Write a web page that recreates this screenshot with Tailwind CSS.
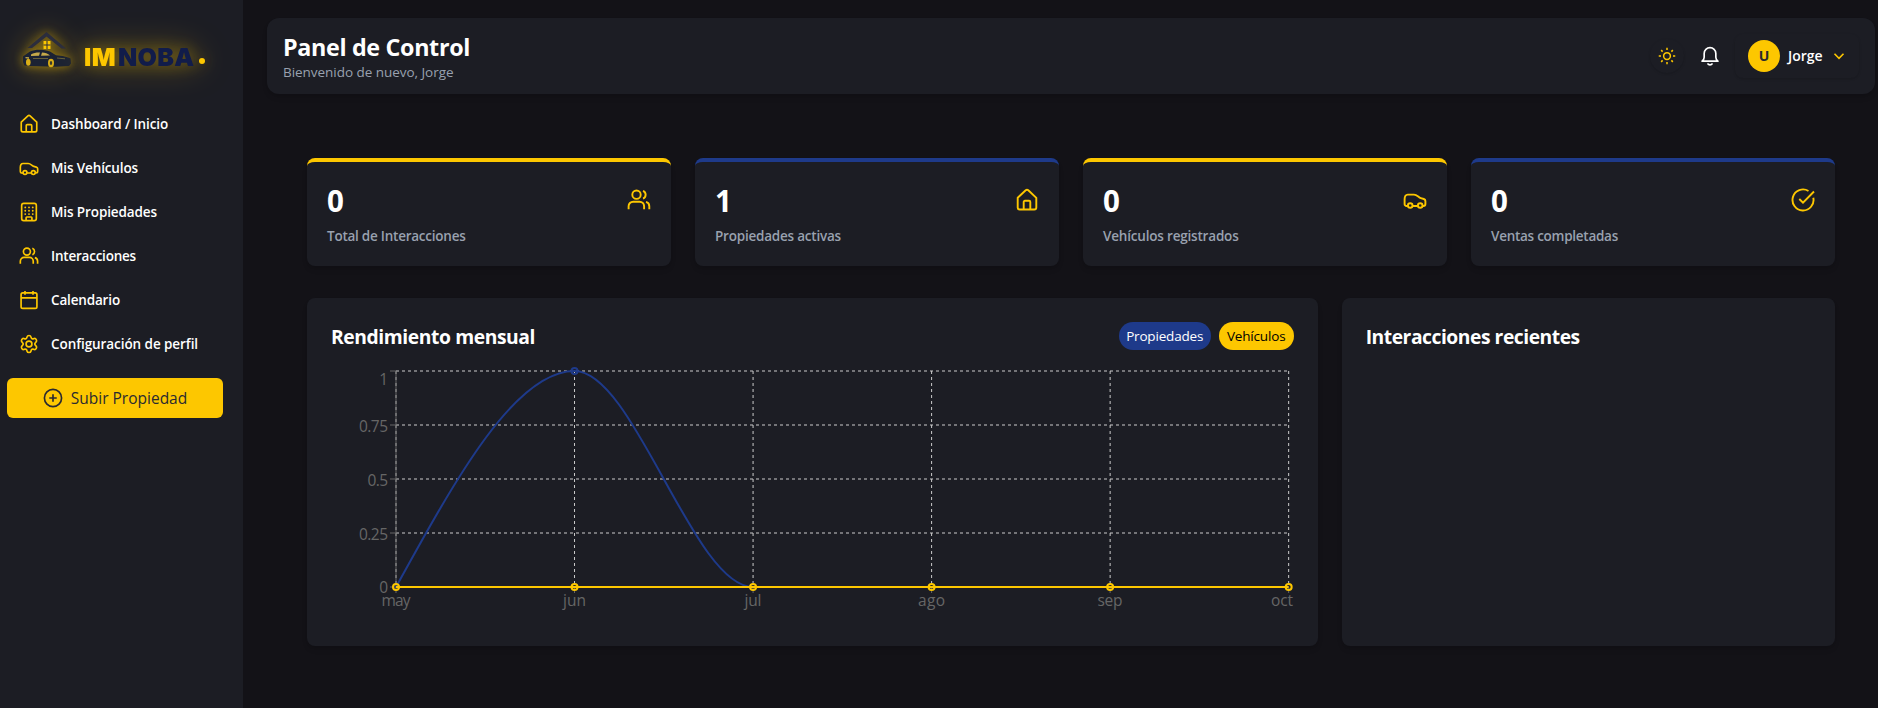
<!DOCTYPE html>
<html lang="es">
<head>
<meta charset="utf-8">
<title>Panel de Control</title>
<script src="https://cdn.jsdelivr.net/npm/@tailwindcss/browser@4"></script>
</head>
<body class="h-[708px] overflow-hidden bg-[#131217] font-['Open_Sans','Noto_Sans',sans-serif] text-white">
<svg class="hidden">
  <g id="home"><path d="M2.700 9.800 10.700 2.300a1.900 1.900 0 0 1 2.600 0l8 7.500V19.500a2 2 0 0 1-2 2H4.700a2 2 0 0 1-2-2Z"/><path d="M8.700 21.500V14a1.200 1.200 0 0 1 1.200-1.200h4.200a1.200 1.200 0 0 1 1.200 1.200v7.500"/></g>
  <g id="car"><path d="M4.800 18H3.600A1.900 1.900 0 0 1 1.600 16V11.200c0-2.900 1.200-4.600 3.200-4.600h6.200c3 0 4.500 2.800 6.800 3.500l3 .9c1 .3 1.600 1 1.600 2v3a2 2 0 0 1-2 2h-.8M9.700 18h5.100"/><circle cx="7.200" cy="17.500" r="2.300"/><circle cx="17.200" cy="17.500" r="2.300"/></g>
  <g id="building"><rect x="3.200" y="1.600" width="17.600" height="20.800" rx="2.500"/><path d="M8.500 22v-3a1 1 0 0 1 1-1h5a1 1 0 0 1 1 1v3"/><path d="M7.500 6.500h.01M12 6.500h.01M16.500 6.500h.01M7.500 10.500h.01M12 10.500h.01M16.500 10.500h.01M7.500 14.500h.01M12 14.500h.01M16.500 14.500h.01" stroke-linecap="round" stroke-width="2.200"/></g>
  <g id="users"><circle cx="9.500" cy="6.700" r="4.200"/><path d="M1.600 21.200v-3a4.500 4.500 0 0 1 4.500-4.500h6.500a4.500 4.500 0 0 1 4.500 4.500v3M16 2.800a4.200 4.200 0 0 1 0 7.800M19 13.900a4.500 4.500 0 0 1 3.300 4.300v3"/></g>
  <g id="cal"><rect x="2.500" y="3.500" width="19" height="18.500" rx="2"/><path d="M2.500 9.500h19M7.200 1.200v4.500M16.800 1.200v4.500"/></g>
  <g id="gear"><circle cx="12" cy="12" r="3.500"/><path d="M9.700 3.300c.5-2 4.100-2 4.600 0l.4 1.300a1.800 1.800 0 0 0 2.300 1.200l1.300-.4c2-.5 3.700 2.500 2.300 4l-1 1.200a1.900 1.900 0 0 0 0 2.800l1 1.200c1.400 1.500-.3 4.500-2.300 4l-1.300-.4a1.800 1.800 0 0 0-2.300 1.200l-.4 1.300c-.5 2-4.100 2-4.600 0l-.4-1.300A1.800 1.800 0 0 0 7 18.200l-1.300.4c-2 .5-3.700-2.500-2.300-4l1-1.200a1.900 1.900 0 0 0 0-2.800l-1-1.200c-1.400-1.500.3-4.500 2.300-4l1.300.4a1.800 1.800 0 0 0 2.300-1.200Z"/></g>
</svg>
<div class="flex h-full">
  <aside class="flex w-[243px] shrink-0 flex-col overflow-hidden bg-[#1c1d24]">
    <div class="flex h-[102px] shrink-0 items-start pl-[23px] pt-8">
      <svg class="h-9 w-12 overflow-visible [filter:drop-shadow(0_0_5px_rgba(253,199,0,0.55))_drop-shadow(0_0_14px_rgba(253,199,0,0.35))]" viewBox="0 0 48 36">
        <path d="M4.500 16 23.500 0 43 16.500H38.500L23.500 4.500 9 16Z" fill="#2b2d3d"/>
        <path d="M20.500 9h7v8h-7z" fill="#fdc700"/><path d="M24 9v8M20.500 13h7" stroke="#2b2d3d"/>
        <path d="M0 24.500 2 23l5-3.500c6-2.500 14-2 20 0l6 3.700c6 .5 12 1.800 14.500 3.300l.5 5-2 2.500-13 .8-26-.8-5.500-.5L0 30Z" fill="#1b2233"/>
        <path d="M8 22.500c3-2 7-2.300 9-2l-1 3.200-8 .3ZM19 20.500c3 0 6 1.200 8 3l-9 .3ZM2.500 25l3.500.3v1.500l-3.500-.5Z" fill="#c5a94a"/>
        <path d="M10 26.500h15M34 26l8 .8" stroke="#66603a"/>
        <ellipse cx="5.300" cy="30.200" rx="2.300" ry="3.500" fill="#d9ae17"/><ellipse cx="28" cy="31" rx="3" ry="4.200" fill="#d9ae17"/><ellipse cx="28" cy="31" rx="1.200" ry="2" fill="#3a3a2c"/>
      </svg>
      <div class="ml-[13px] mt-[10px] flex items-baseline font-['Inter'] text-[25px] leading-[30px] font-black text-[#fdc700] [filter:drop-shadow(0_0_8px_rgba(253,199,0,0.4))_drop-shadow(0_0_16px_rgba(253,199,0,0.35))]">
        <span class="tracking-[0.4px]">IM</span><span class="ml-[2px] tracking-[0.3px] text-[#111c4a]">NOBA</span><span class="ml-[5px] size-1.5 -translate-y-[2px] rounded-full bg-[#fdc700]"></span>
      </div>
    </div>
    <nav class="flex flex-col text-[13.5px] font-semibold [&_a]:flex [&_a]:h-11 [&_a]:items-center [&_a]:gap-3 [&_a]:pl-[19px] [&_svg]:size-5 [&_svg]:fill-none [&_svg]:stroke-[#fdc700] [&_svg]:stroke-2">
      <a><svg viewBox="0 0 24 24"><use href="#home"/></svg><span class="tracking-[-0.11px]">Dashboard / Inicio</span></a>
      <a><svg viewBox="0 0 24 24"><use href="#car"/></svg><span class="tracking-[-0.13px]">Mis Vehículos</span></a>
      <a><svg viewBox="0 0 24 24"><use href="#building"/></svg><span class="tracking-[-0.11px]">Mis Propiedades</span></a>
      <a><svg viewBox="0 0 24 24"><use href="#users"/></svg><span class="tracking-[-0.22px]">Interacciones</span></a>
      <a><svg viewBox="0 0 24 24"><use href="#cal"/></svg><span class="tracking-[-0.16px]">Calendario</span></a>
      <a><svg viewBox="0 0 24 24"><use href="#gear"/></svg><span class="tracking-[-0.07px]">Configuración de perfil</span></a>
    </nav>
    <button class="ml-[7px] mt-3 flex h-10 w-[216px] items-center justify-center gap-2 rounded-md bg-[#fdc700] text-[15.5px] font-medium text-[#2a2a30]">
      <svg class="size-5 fill-none stroke-current stroke-2" viewBox="0 0 24 24"><circle cx="12" cy="12" r="10.300"/><path d="M12 7.500v9M7.500 12h9"/></svg><span class="pt-px">Subir Propiedad</span>
    </button>
  </aside>
  <main class="flex flex-1 flex-col pl-6 pr-[3px] pt-[18px]">
    <header class="flex h-[76px] items-center rounded-xl bg-[#1c1d24] pl-4 pr-4 shadow-md">
      <div class="flex-1 pt-[3px]">
        <h1 class="-mt-px mb-px text-[23.3px] leading-7 font-bold tracking-[-0.33px]">Panel de Control</h1>
        <p class="text-[13.5px] leading-5 tracking-[-0.035px] text-[#99a1af]">Bienvenido de nuevo, Jorge</p>
      </div>
      <div class="flex size-[34px] items-center justify-center rounded-full shadow-sm">
        <svg class="size-[18px] fill-none stroke-[#fdc700] stroke-2" viewBox="0 0 24 24"><circle cx="12" cy="12" r="4.500"/><path d="M12 1v3M12 20v3M1 12h3M20 12h3M4.200 4.200l2 2M17.800 17.800l2 2M4.200 19.800l2-2M17.800 6.200l2-2"/></svg>
      </div>
      <svg class="ml-4 size-5 fill-none stroke-white stroke-2" viewBox="0 0 24 24" stroke-linejoin="round" stroke-linecap="round"><path d="M2.500 18.200h19c-1.600-1.300-2.500-2.600-2.500-4.700V9a7 7 0 0 0-14 0v4.500c0 2.100-.9 3.400-2.500 4.700ZM9.500 21.500c.7 1.500 4.300 1.500 5 0"/></svg>
      <div class="ml-[15px] flex h-11 w-[124px] items-center rounded-lg pl-[13px] shadow-sm">
        <span class="flex size-8 items-center justify-center rounded-full bg-[#fdc700] text-sm font-bold text-[#2a2a30]">U</span>
        <span class="ml-2 text-sm font-semibold">Jorge</span>
        <svg class="ml-[10px] h-3 w-3 fill-none stroke-[#fdc700] stroke-[1.600]" viewBox="0 0 12 12"><path d="M1.500 3.800 6 8.300l4.500-4.500"/></svg>
      </div>
    </header>
    <div class="mt-16 flex flex-col gap-8 pl-10 pr-10">
      <section class="grid grid-cols-4 gap-6 [&>div]:flex [&>div]:h-[108px] [&>div]:justify-between [&>div]:rounded-lg [&>div]:border-t-4 [&>div]:bg-[#1c1d24] [&>div]:p-5 [&>div]:shadow-md [&_p]:pt-px [&_p]:text-[29.5px] [&_p]:leading-9 [&_p]:font-bold [&_small]:mt-[7px] [&_small]:block [&_small]:text-[13.5px] [&_small]:leading-5 [&_small]:font-semibold [&_small]:text-[#99a1af] [&_svg]:mt-1.5 [&_svg]:size-6 [&_svg]:fill-none [&_svg]:stroke-[#fdc700] [&_svg]:stroke-[1.900]">
        <div class="border-[#fdc700]"><div><p>0</p><small class="tracking-[-0.24px]">Total de Interacciones</small></div><svg viewBox="0 0 24 24"><use href="#users"/></svg></div>
        <div class="border-[#1e3a8a]"><div><p>1</p><small class="tracking-[-0.215px]">Propiedades activas</small></div><svg viewBox="0 0 24 24"><use href="#home"/></svg></div>
        <div class="border-[#fdc700]"><div><p>0</p><small class="tracking-[-0.19px]">Vehículos registrados</small></div><svg viewBox="0 0 24 24"><use href="#car"/></svg></div>
        <div class="border-[#1e3a8a]"><div><p>0</p><small class="tracking-[-0.265px]">Ventas completadas</small></div><svg viewBox="0 0 24 24"><path d="M22.300 9.800A10.500 10.500 0 1 1 17.500 3M8.300 11l3.700 3.700L23 3.500"/></svg></div>
      </section>
      <section class="grid h-[348px] grid-cols-3 gap-6">
        <div class="col-span-2 flex flex-col rounded-lg bg-[#1c1d24] p-6 shadow-md">
          <div class="flex h-7 items-center">
            <h2 class="flex-1 pt-px text-[19.3px] leading-7 font-bold tracking-[-0.41px]">Rendimiento mensual</h2>
            <div class="flex gap-2 text-[13.5px]">
              <button class="flex h-7 w-[92px] items-center justify-center rounded-full bg-[#1e3a8a] tracking-[-0.18px]">Propiedades</button>
              <button class="flex h-7 w-[75px] items-center justify-center rounded-full bg-[#fdc700] tracking-[-0.17px] text-black">Vehículos</button>
            </div>
          </div>
          <svg class="mt-4 h-64 w-[963px]" viewBox="0 0 963 256" fill="none">
            <g stroke="#ccc" stroke-dasharray="3 3"><path d="M65 5H957.670M65 59H957.670M65 113H957.670M65 167H957.670M65 221H957.670"/><path d="M65 5V221M243.530 5V221M422.070 5V221M600.600 5V221M779.130 5V221M957.670 5V221"/></g>
            <path stroke="#666" d="M65 5V221M65 221H957.670M59 5h6M59 59h6M59 113h6M59 167h6M59 221h6M65 221v6M243.530 221v6M422.070 221v6M600.600 221v6M779.130 221v6M957.670 221v6"/>
            <g fill="#666" font-size="15.500">
              <g text-anchor="end"><text x="57" y="18.500">1</text><text x="57" y="65.500" textLength="29">0.75</text><text x="57" y="119.500" textLength="20.500">0.5</text><text x="57" y="173.500" textLength="29">0.25</text><text x="57" y="227">0</text></g>
              <g text-anchor="middle"><text x="65" y="240" textLength="29">may</text><text x="243.500" y="240" textLength="23">jun</text><text x="422" y="240" textLength="17">jul</text><text x="600.600" y="240" textLength="27">ago</text><text x="779" y="240" textLength="25">sep</text><text x="951" y="240" textLength="22">oct</text></g>
            </g>
            <g stroke="#1e3a8a" stroke-width="2"><path d="M65 221C124.500 113 184 5 243.530 5C303 5 362.500 221 422.070 221H957.670"/><circle cx="243.530" cy="5" r="3"/></g>
            <g stroke="#fdc700" stroke-width="2"><path d="M65 221H957.670"/><circle cx="65" cy="221" r="3"/><circle cx="243.530" cy="221" r="3"/><circle cx="422.070" cy="221" r="3"/><circle cx="600.600" cy="221" r="3"/><circle cx="779.130" cy="221" r="3"/><circle cx="957.670" cy="221" r="3"/></g>
          </svg>
        </div>
        <div class="rounded-lg bg-[#1c1d24] p-6 shadow-md"><h2 class="pt-px text-[19.3px] leading-7 font-bold tracking-[-0.47px]">Interacciones recientes</h2></div>
      </section>
    </div>
  </main>
</div>
</body>
</html>
